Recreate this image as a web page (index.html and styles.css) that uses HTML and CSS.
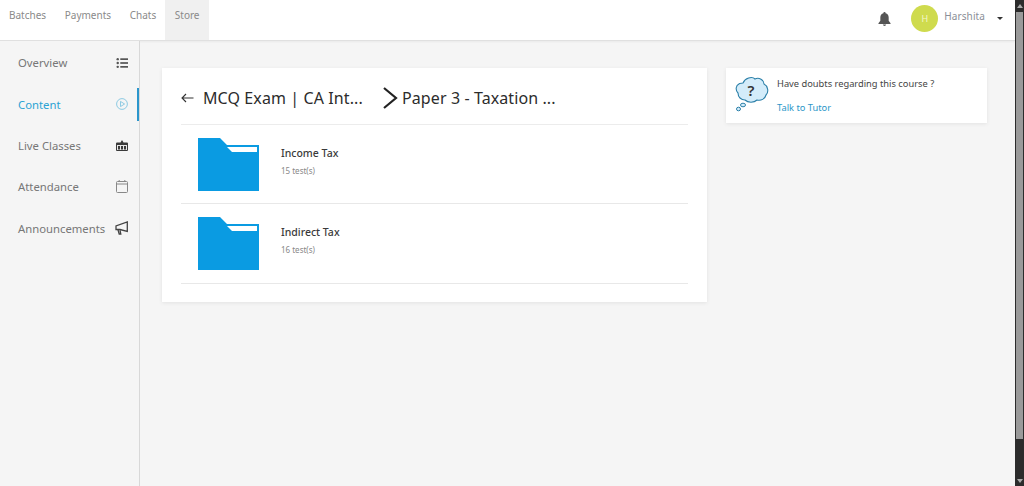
FILE: index.html
```html
<!DOCTYPE html>
<html lang="en">
<head>
<meta charset="utf-8">
<title>Content</title>
<link rel="stylesheet" href="styles.css">
</head>
<body>
<div class="app">
  <div class="page">
    <header class="topbar">
      <nav class="tabs">
        <a class="tab">Batches</a>
        <a class="tab">Payments</a>
        <a class="tab">Chats</a>
        <a class="tab tab-active">Store</a>
      </nav>
      <div class="user">
        <svg class="bell" width="13" height="14" viewBox="0 0 14 15"><path fill="#555" d="M7 0a1.200 1.200 0 0 1 1.200 1.300C10.400 1.900 11.500 3.700 11.500 6v3.500L13.500 12v.8H.5V12l2-2.500V6c0-2.300 1.100-4.100 3.300-4.700A1.200 1.200 0 0 1 7 0zM5.200 13.400h3.600A1.900 1.900 0 0 1 7 15a1.900 1.900 0 0 1-1.800-1.600z"/></svg>
        <span class="avatar">H</span>
        <span class="username">Harshita</span>
        <span class="caret"></span>
      </div>
    </header>
    <div class="body">
      <aside class="sidebar">
        <a class="side-item"><span>Overview</span>
          <svg width="12" height="12" viewBox="0 0 14 14" fill="#555"><circle cx="2" cy="2.500" r="1.400"/><circle cx="2" cy="7" r="1.400"/><circle cx="2" cy="11.500" r="1.400"/><rect x="5" y="1.500" width="9" height="2"/><rect x="5" y="6" width="9" height="2"/><rect x="5" y="10.500" width="9" height="2"/></svg>
        </a>
        <a class="side-item side-active"><span>Content</span>
          <svg width="12" height="12" viewBox="0 0 14 14" fill="none" stroke="#7cc3e0"><circle cx="7" cy="7" r="6.300"/><path d="M5.300 4 10 7l-4.700 3z"/></svg>
        </a>
        <a class="side-item"><span>Live Classes</span>
          <svg width="12" height="11" viewBox="0 0 12 11"><path fill="#3a3a3a" d="M1 2.500h3.500L6 0l1.500 2.500H11a1 1 0 0 1 1 1V10a1 1 0 0 1-1 1H1a1 1 0 0 1-1-1V3.500a1 1 0 0 1 1-1z"/><rect x="1" y="5" width="10" height="5" fill="#e8e8e8"/><rect x="2" y="6" width="2" height="3.500" fill="#3a3a3a"/><rect x="5" y="6" width="2" height="3.500" fill="#3a3a3a"/><rect x="8" y="6" width="2" height="3.500" fill="#3a3a3a"/></svg>
        </a>
        <a class="side-item"><span>Attendance</span>
          <svg width="12" height="13" viewBox="0 0 12 13" fill="none" stroke="#888"><rect x=".5" y="1.500" width="11" height="11" rx="1"/><path d="M.5 4h11M3.200 0V1.500M8.800 0V1.500"/></svg>
        </a>
        <a class="side-item"><span>Announcements</span>
          <svg width="13" height="14" viewBox="0 0 13 14" fill="none" stroke="#444" stroke-width="1.300"><path d="M12.300 1v9.500L5 8.500H1V5z"/><path d="M3 8.800l1.200 4.200h1.600l-.8-3.800"/></svg>
        </a>
      </aside>
      <main class="main">
        <section class="card">
          <div class="crumbs">
            <svg class="back" width="13" height="10" viewBox="0 0 13 10" fill="none" stroke="#333" stroke-width="1.100"><path d="M12.500 5H1M5 1 1 5l4 4"/></svg>
            <span class="crumb crumb-first">MCQ Exam | CA Int...</span>
            <svg class="chevron" width="16" height="24" viewBox="0 0 16 24" fill="none" stroke="#222" stroke-width="2.200"><path d="M2 2l12 10L2 22"/></svg>
            <span class="crumb">Paper 3 - Taxation ...</span>
          </div>
          <div class="folder-row">
            <svg class="folder" width="61" height="53" viewBox="0 0 61 53"><path fill="#0a9be2" d="M0 0h22l7 7h32v46H0z"/><path fill="#fff" d="M29 9h30v5H34z"/></svg>
            <div class="folder-text"><div class="folder-name">Income Tax</div><div class="folder-count">15 test(s)</div></div>
          </div>
          <div class="folder-row">
            <svg class="folder" width="61" height="53" viewBox="0 0 61 53"><path fill="#0a9be2" d="M0 0h22l7 7h32v46H0z"/><path fill="#fff" d="M29 9h30v5H34z"/></svg>
            <div class="folder-text"><div class="folder-name">Indirect Tax</div><div class="folder-count">16 test(s)</div></div>
          </div>
        </section>
        <aside class="doubt">
          <svg class="cloud" width="34" height="36" viewBox="0 0 34 36"><path fill="#d3ecfa" stroke="#2b7fa8" stroke-width="1.100" d="M8 7C10 2 17 0 20 3c4-2 9 1 9 5 4 2 5 8 2 11-1 4-5 6-9 5-3 3-9 3-12 0-4 0-7-3-7-7-3-3-2-8 1-9 0-1 2-1 4-1z"/><ellipse cx="8" cy="29" rx="2.500" ry="1.800" fill="#d3ecfa" stroke="#2b7fa8"/><ellipse cx="3.500" cy="33" rx="2" ry="1.800" fill="#d3ecfa" stroke="#2b7fa8"/><text x="16" y="19.500" class="cloud-mark">?</text></svg>
          <div class="doubt-text">
            <div class="doubt-title">Have doubts regarding this course ?</div>
            <a class="doubt-link">Talk to Tutor</a>
          </div>
        </aside>
      </main>
    </div>
  </div>
  <div class="scrollbar">
    <div class="arrow-up"></div>
    <div class="thumb"></div>
    <div class="arrow-down"></div>
  </div>
</div>
</body>
</html>
```
FILE: styles.css
```css
* { box-sizing: border-box; }
html, body { margin: 0; height: 100%; overflow: hidden; }
body { font-family: "Noto Sans", "Open Sans", sans-serif; background: #f5f5f5; color: #333; }
.app { display: flex; height: 486px; }
.page { flex: 1; min-width: 0; display: flex; flex-direction: column; }
.topbar { height: 41px; flex: none; background: #fff; border-bottom: 1px solid #e0e0e0; box-shadow: 0 1px 2px rgba(0,0,0,.05); display: flex; justify-content: space-between; }
.tabs { display: flex; }
.tab { font-size: 10px; color: #8a8a8a; padding: 8px 9.300px 0; height: 40px; }
.tab:first-child { padding-left: 9px; }
.tab-active { background: #f0f0f0; }
.user { display: flex; align-items: flex-start; padding-top: 5px; padding-right: 12px; }
.bell { margin-top: 7px; margin-right: 20px; }
.avatar { width: 27px; height: 27px; border-radius: 50%; background: #cfdb4e; color: #f4f7c8; font-size: 9px; display: flex; align-items: center; justify-content: center; margin-right: 6px; }
.username { font-size: 10px; color: #8b8f98; margin-top: 4px; letter-spacing: .1px; }
.caret { width: 0; height: 0; border: 3px solid transparent; border-top-color: #333; border-bottom: 0; margin: 12px 0 0 12px; }
.body { flex: 1; display: flex; min-height: 0; }
.sidebar { width: 140px; flex: none; background: #f5f5f5; border-right: 1px solid #d8d8d8; padding-top: 1px; }
.side-item { height: 41.500px; display: flex; align-items: center; justify-content: space-between; padding: 0 11px 0 18px; font-size: 11.300px; color: #777; }
.side-active { color: #2ba3d4; border-right: 2px solid #2b96cc; padding-right: 9px; height: 33px; margin: 4px 0; }
.main { flex: 1; display: flex; align-items: flex-start; padding: 27px 0 0 22px; gap: 19px; min-width: 0; }
.card { width: 545px; height: 234px; background: #fff; padding: 0 19px; box-shadow: 0 1px 4px rgba(0,0,0,.08); flex: none; }
.crumbs { height: 57px; display: flex; align-items: center; padding-top: 4px; border-bottom: 1px solid #ececec; }
.back { margin-right: 9px; margin-top: -1px; }
.crumb { font-size: 16px; color: #2c2c2c; white-space: nowrap; letter-spacing: .1px; }
.crumb-first { width: 179px; }
.chevron { margin-right: 4px; }
.folder-row { height: 79.300px; display: flex; align-items: center; padding-left: 17px; border-bottom: 1px solid #e8e8e8; }
.folder-text { margin-left: 22px; margin-top: -6px; }
.folder-name { font-size: 10.500px; font-weight: 500; color: #3a3a3a; }
.folder-count { font-size: 8px; color: #888; margin-top: 5px; }
.doubt { width: 261px; height: 55px; background: #fff; display: flex; padding: 8px 0 0 9px; box-shadow: 0 1px 4px rgba(0,0,0,.08); flex: none; }
.cloud { flex: none; }
.cloud-mark { font-size: 15px; font-weight: 600; fill: #333; text-anchor: middle; font-family: "Noto Sans", sans-serif; }
.doubt-text { margin-left: 8px; font-size: 9.300px; }
.doubt-title { color: #444; margin-top: 1px; }
.doubt-link { display: block; color: #2b96c8; margin-top: 11px; }
.scrollbar { width: 9px; flex: none; background: #2c2c2c; display: flex; flex-direction: column; align-items: center; }
.arrow-up { width: 0; height: 0; border: 3px solid transparent; border-bottom: 4px solid #aaa; border-top: 0; margin-top: 4px; }
.thumb { width: 7px; height: 427px; background: #9a9a9a; margin-top: 4px; }
.arrow-down { width: 0; height: 0; border: 3px solid transparent; border-top: 4px solid #aaa; border-bottom: 0; margin-top: auto; margin-bottom: 3px; }
```
